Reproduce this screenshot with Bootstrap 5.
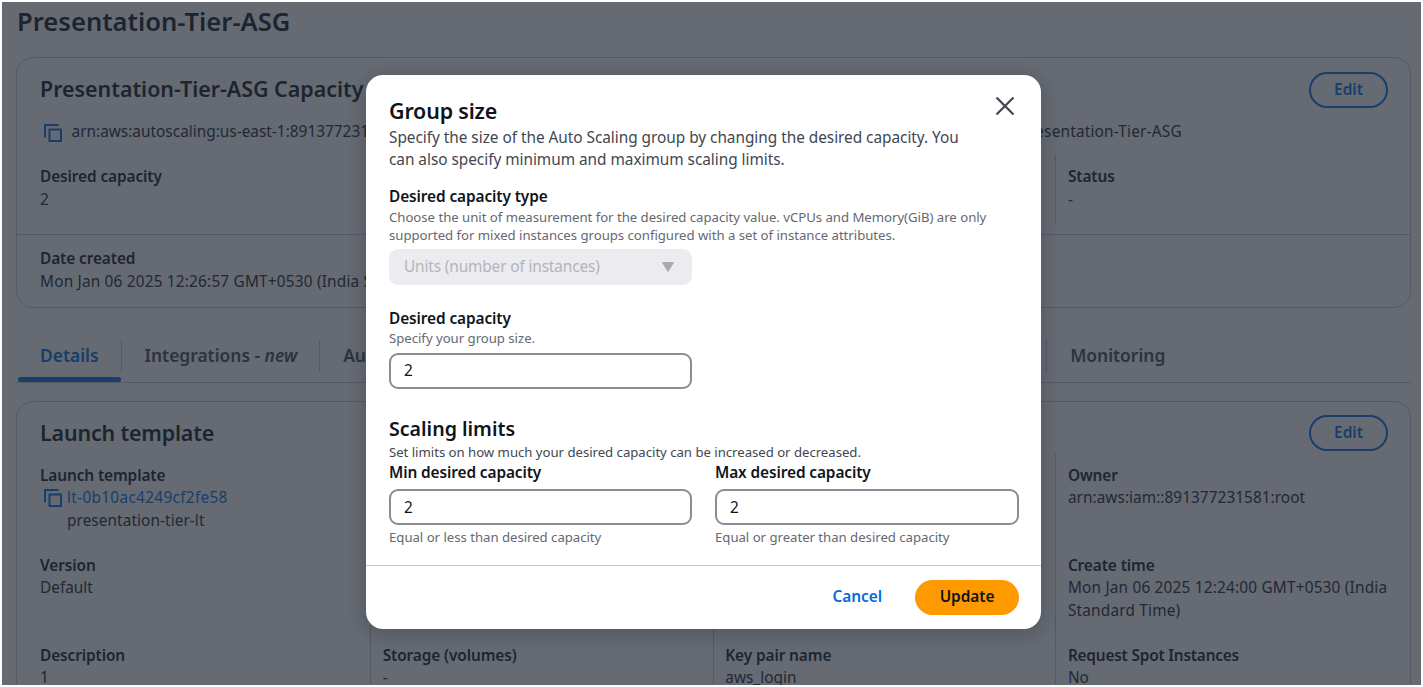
<!DOCTYPE html>
<html lang="en">
<head>
<meta charset="utf-8">
<meta name="viewport" content="width=device-width, initial-scale=1">
<title>Presentation-Tier-ASG</title>
<link href="https://cdn.jsdelivr.net/npm/bootstrap@5.3.0/dist/css/bootstrap.min.css" rel="stylesheet">
<style>
  :root { --ink: #0f141a; --soft: #424650; --hint: #656871; --link: #006ce0; --rule: #c6c6cd; }
  body { font: 400 15.4px/22.4px "Noto Sans", "Open Sans", sans-serif; color: var(--ink); background: #fff; overflow: hidden; }
  .frame { position: relative; width: 1419px; height: 683px; margin: 2px; overflow: hidden; }
  .page { padding: 4px 10px 0 14px; }
  h1, h2, h3 { font-weight: 600; margin: 0; }
  .page h1 { font-size: 25.6px; line-height: 32px; padding-left: 1px; }
  .panel { border: 1px solid var(--rule); border-radius: 17px; background: #fff; }
  .panel h2 { font-size: 21.4px; line-height: 28px; }
  .panel-head { padding: 14px 22px 0 23px; height: 54px; }
  .edit { width: 79px; height: 36px; padding: 0; border: 2px solid var(--link); border-radius: 18px; color: var(--link); font-size: 15.4px; font-weight: 600; line-height: 30px; }
  .fields { margin: 0 12px 0 11px; }
  .fields > div { flex: 1 1 0; min-width: 0; padding-left: 12px; }
  .fields > div + div { border-left: 1px solid var(--rule); padding-left: 11.5px; }
  .lbl { font-weight: 600; letter-spacing: -.1px; }
  .wide { letter-spacing: .18px; }
  .soft { color: #1c222b; }
  .lnk { color: var(--link); }
  .tabs { height: 52px; border-bottom: 1px solid var(--rule); font-size: 17.4px; font-weight: 600; color: var(--soft); }
  .tabs > div { position: relative; padding: 0 22px 0 23px; height: 32px; line-height: 31px; margin-top: 9px; border-right: 1px solid var(--rule); white-space: nowrap; }
  .tabs > .on { color: var(--link); padding-left: 24px; }
  .tabs > .on::after { content: ""; position: absolute; left: 2px; right: 0; bottom: -10px; height: 5px; border-radius: 3px; background: var(--link); }
  .veil { position: absolute; inset: 0; background: rgba(35,43,55,.7); }
  .dialog { position: absolute; left: 364px; top: 73px; width: 675px; height: 554px; border-radius: 17px; background: #fff; box-shadow: 0 4px 20px 1px rgba(0,7,22,.2); display: flex; flex-direction: column; }
  .dialog-main { flex: 1; padding: 22px 22px 0 23px; }
  .dialog h2 { font-size: 21.4px; line-height: 28px; letter-spacing: -.15px; }
  .dialog h3 { font-size: 19.6px; line-height: 26px; }
  .desc { color: var(--soft); line-height: 22px; letter-spacing: -.04px; }
  .hint { color: var(--hint); font-size: 13.2px; line-height: 18px; letter-spacing: -.03px; }
  .field { height: 36px; border: 2px solid #8c8c94; border-radius: 9px; padding: 0 13px; color: var(--ink); font-size: 15.4px; line-height: 32px; background: #fff; }
  .off { background: #ebebf0; border-color: #ebebf0; color: #b4b4bb; }
  .half { width: 303px; }
  .dialog-foot { height: 64px; border-top: 1px solid var(--rule); padding: 0 22px; }
  .dialog-foot .btn { height: 35px; padding: 0 0 2px; border: 0; border-radius: 18px; font-size: 15.4px; font-weight: 600; line-height: 33px; letter-spacing: -.05px; }
  .update { width: 104px; background: #f90; color: var(--ink); }
</style>
</head>
<body>
<div class="frame">
  <main class="page">
    <h1>Presentation-Tier-ASG</h1>

    <section class="panel" style="margin-top:19px;height:251px">
      <div class="panel-head d-flex justify-content-between">
        <h2 style="padding-top:3px">Presentation-Tier-ASG Capacity</h2>
        <button class="btn edit">Edit</button>
      </div>
      <div class="d-flex soft" style="padding:9px 0 0 27px">
        <svg width="18" height="18" viewBox="0 0 18 18" fill="none" stroke="#006ce0" stroke-width="2" style="margin-top:3px"><path d="M1 13.5V1h13.5M5.5 5.5H17V17H5.5z"/></svg>
        <span style="margin-left:9.5px;width:948px;white-space:nowrap">arn:aws:autoscaling:us-east-1:891377231</span>
        <span class="wide">Presentation-Tier-ASG</span>
      </div>
      <div class="fields d-flex" style="margin-top:12px;height:68px">
        <div style="padding-top:11px"><div class="lbl">Desired capacity</div><div class="soft">2</div></div>
        <div></div><div></div>
        <div style="padding-top:11px"><div class="lbl">Status</div><div class="soft">-</div></div>
      </div>
      <div class="border-top" style="margin-top:11px;padding:13px 23px 0;border-color:var(--rule)!important">
        <div class="lbl">Date created</div>
        <div class="soft wide">Mon Jan 06 2025 12:26:57 GMT+0530 (India Standard Time)</div>
      </div>
    </section>

    <nav class="tabs d-flex" style="margin-top:23px">
      <div class="on">Details</div>
      <div>Integrations - <em>new</em></div>
      <div style="width:727px">Automatic scaling</div>
      <div class="border-0">Monitoring</div>
    </nav>

    <section class="panel" style="margin-top:18px;height:330px">
      <div class="panel-head d-flex justify-content-between" style="padding-top:13px;height:51px">
        <h2 style="padding-top:4px;letter-spacing:-.15px">Launch template</h2>
        <button class="btn edit">Edit</button>
      </div>
      <div class="fields d-flex" style="height:260px">
        <div>
          <div style="height:90px;padding-top:12px">
            <div class="lbl">Launch template</div>
            <div class="d-flex" style="padding-left:4px">
              <svg width="18" height="18" viewBox="0 0 18 18" fill="none" stroke="#006ce0" stroke-width="2" style="margin-top:2px"><path d="M1 13.5V1h13.5M5.5 5.5H17V17H5.5z"/></svg>
              <div style="margin-left:5px"><div class="lnk" style="letter-spacing:.3px">lt-0b10ac4249cf2fe58</div><div class="soft" style="letter-spacing:.06px">presentation-tier-lt</div></div>
            </div>
          </div>
          <div style="height:90px;padding-top:12px"><div class="lbl">Version</div><div class="soft">Default</div></div>
          <div style="padding-top:12px"><div class="lbl">Description</div><div class="soft">1</div></div>
        </div>
        <div style="padding-top:192px"><div class="lbl">Storage (volumes)</div><div class="soft">-</div></div>
        <div style="padding-top:192px"><div class="lbl">Key pair name</div><div class="soft">aws_login</div></div>
        <div>
          <div style="height:90px;padding-top:12px"><div class="lbl">Owner</div><div class="soft" style="letter-spacing:.04px">arn:aws:iam::891377231581:root</div></div>
          <div style="height:90px;padding-top:12px"><div class="lbl">Create time</div><div class="soft wide">Mon Jan 06 2025 12:24:00 GMT+0530 (India Standard Time)</div></div>
          <div style="padding-top:12px"><div class="lbl" style="letter-spacing:-.2px">Request Spot Instances</div><div class="soft">No</div></div>
        </div>
      </div>
    </section>
  </main>

  <div class="veil"></div>

  <div class="dialog" role="dialog" aria-label="Group size">
    <div class="dialog-main">
      <div class="d-flex justify-content-between">
        <h2>Group size</h2>
        <svg width="20" height="20" viewBox="0 0 20 20" fill="none" stroke="#424650" stroke-width="2.2" style="margin-right:4px"><path d="M1.5 .5 18.5 17.5M18.5 .5 1.5 17.5"/></svg>
      </div>
      <div class="desc" style="margin-top:2px">Specify the size of the Auto Scaling group by changing the desired capacity. You<br>can also specify minimum and maximum scaling limits.</div>

      <div class="lbl" style="margin-top:15px">Desired capacity type</div>
      <div class="hint">Choose the unit of measurement for the desired capacity value. vCPUs and Memory(GiB) are only<br>supported for mixed instances groups configured with a set of instance attributes.</div>
      <div class="field off half d-flex align-items-center justify-content-between" style="margin-top:5px">
        <span style="letter-spacing:-.14px">Units (number of instances)</span>
        <svg width="12" height="10" viewBox="0 0 12 10" fill="#a9a9b2" style="margin-right:3px"><path d="M.5.5h11L6 9.5z" stroke="#a9a9b2" stroke-linejoin="round"/></svg>
      </div>

      <div class="lbl" style="margin-top:23px">Desired capacity</div>
      <div class="hint" style="margin-top:-2px">Specify your group size.</div>
      <input class="field half d-block" style="margin-top:6px" value="2">

      <h3 style="margin-top:27px">Scaling limits</h3>
      <div class="hint" style="color:var(--soft);margin-top:1px">Set limits on how much your desired capacity can be increased or decreased.</div>
      <div class="d-flex" style="gap:23px;margin-top:1px">
        <div><div class="lbl">Min desired capacity</div><input class="field half d-block" style="margin:5px 0 3px" value="2"><div class="hint">Equal or less than desired capacity</div></div>
        <div><div class="lbl">Max desired capacity</div><input class="field d-block" style="margin:5px 0 3px;width:304px" value="2"><div class="hint">Equal or greater than desired capacity</div></div>
      </div>
    </div>
    <div class="dialog-foot d-flex justify-content-end align-items-center">
      <button class="btn lnk" style="margin-right:33px">Cancel</button>
      <button class="btn update">Update</button>
    </div>
  </div>
</div>
<script src="https://cdn.jsdelivr.net/npm/bootstrap@5.3.0/dist/js/bootstrap.bundle.min.js"></script>
</body>
</html>
